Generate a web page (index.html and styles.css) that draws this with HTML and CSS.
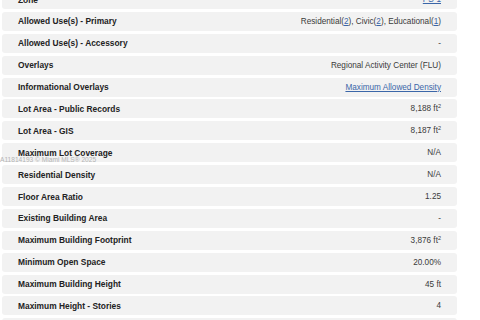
FILE: index.html
```html
<!DOCTYPE html>
<html>
<head>
<meta charset="utf-8">
<link rel="stylesheet" href="styles.css">
</head>
<body>
<div class="table">
  <div class="row"><div class="label">Zone</div><div class="value"><a href="#">PS-1</a></div></div>
  <div class="row"><div class="label">Allowed Use(s) - Primary</div><div class="value">Residential(<a href="#">2</a>), Civic(<a href="#">2</a>), Educational(<a href="#">1</a>)</div></div>
  <div class="row"><div class="label">Allowed Use(s) - Accessory</div><div class="value">-</div></div>
  <div class="row"><div class="label">Overlays</div><div class="value">Regional Activity Center (FLU)</div></div>
  <div class="row"><div class="label">Informational Overlays</div><div class="value"><a href="#">Maximum Allowed Density</a></div></div>
  <div class="row"><div class="label">Lot Area - Public Records</div><div class="value">8,188 ft<sup>2</sup></div></div>
  <div class="row"><div class="label">Lot Area - GIS</div><div class="value">8,187 ft<sup>2</sup></div></div>
  <div class="row"><div class="label">Maximum Lot Coverage</div><div class="value">N/A</div><span class="watermark">A11814193 © Miami MLS® 2025</span></div>
  <div class="row"><div class="label">Residential Density</div><div class="value">N/A</div></div>
  <div class="row"><div class="label">Floor Area Ratio</div><div class="value">1.25</div></div>
  <div class="row"><div class="label">Existing Building Area</div><div class="value">-</div></div>
  <div class="row"><div class="label">Maximum Building Footprint</div><div class="value">3,876 ft<sup>2</sup></div></div>
  <div class="row"><div class="label">Minimum Open Space</div><div class="value">20.00%</div></div>
  <div class="row"><div class="label">Maximum Building Height</div><div class="value">45 ft</div></div>
  <div class="row"><div class="label">Maximum Height - Stories</div><div class="value">4</div></div>
  <div class="row"></div>
</div>
</body>
</html>
```
FILE: styles.css
```css
html, body {
  margin: 0;
  padding: 0;
  background: #ffffff;
  overflow: hidden;
}
body {
  font-family: "Liberation Sans", Arial, sans-serif;
  width: 480px;
  height: 320px;
}
.table {
  margin-top: -10px;
  margin-left: 2px;
  width: 455px;
  display: flex;
  flex-direction: column;
  gap: 2.9px;
}
.row {
  position: relative;
  flex: none;
  height: 19px;
  background: #f2f2f2;
  border-radius: 3px;
  display: flex;
  align-items: center;
  justify-content: space-between;
  padding: 0 16px;
}
.label {
  font-size: 8.4px;
  font-weight: bold;
  color: #222222;
}
.value {
  font-size: 8.2px;
  color: #3a3a3a;
  text-align: right;
}
.value a {
  color: #3b66a8;
  text-decoration: underline;
}
sup {
  font-size: 5.5px;
  vertical-align: 3px;
  line-height: 0;
}
.watermark {
  position: absolute;
  z-index: 2;
  left: -2px;
  top: 13px;
  font-size: 6.6px;
  color: #b4b4b4;
  white-space: nowrap;
}
```
